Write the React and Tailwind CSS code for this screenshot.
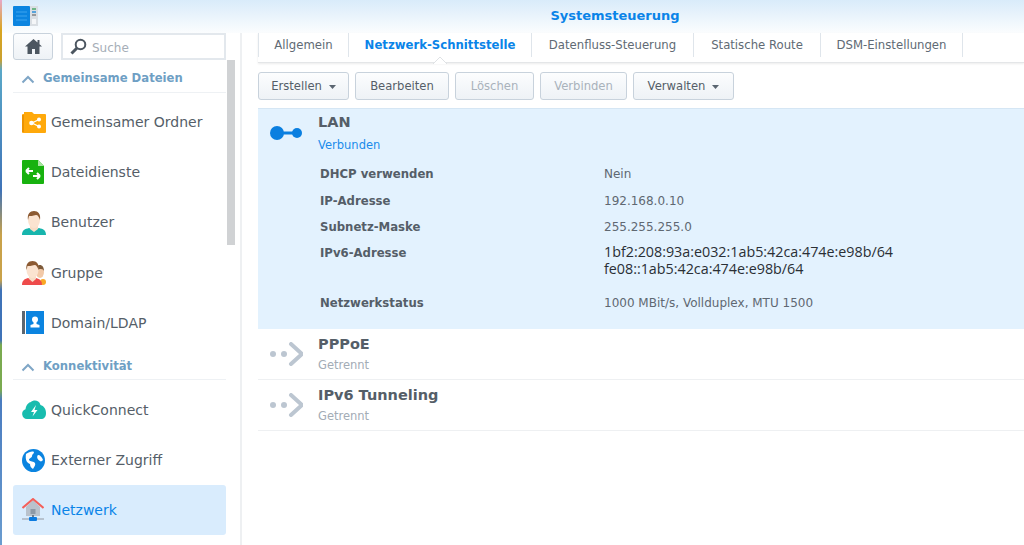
import React from "react";

const Caret = () => (
  <svg width="7" height="4" viewBox="0 0 7 4" className="ml-[7px]"><path d="M0 0h7L3.500 4z" fill="#5a6570" /></svg>
);
const Chev = () => (
  <svg width="14" height="9" viewBox="0 0 14 9" className="mr-[8px] ml-[1px]"><path d="M1.500 7.500 7 2l5.500 5.500" fill="none" stroke="#7fa6c6" strokeWidth="2" /></svg>
);

const Folder = () => (
  <svg width="24" height="22" viewBox="0 0 24 22"><path d="M1 3h1v-2h8l2 2h11a1 1 0 0 1 1 1v17a1 1 0 0 1-1 1H1a1 1 0 0 1-1-1V4a1 1 0 0 1 1-1z" fill="#ffa90b" /><path d="M1 4v17" stroke="#e58c00" strokeWidth="1.500" /><path d="M10 12l7-3.500M10 12l7 3.500" stroke="#fff" strokeWidth="1.300" /><circle cx="9.500" cy="12" r="2.300" fill="#fff" /><circle cx="17" cy="8.500" r="2" fill="#fff" /><circle cx="17" cy="15.500" r="2" fill="#fff" /></svg>
);
const FileSvc = () => (
  <svg width="22" height="24" viewBox="0 0 22 24"><path d="M1 0h15l6 6v17a1 1 0 0 1-1 1H1a1 1 0 0 1-1-1V1a1 1 0 0 1 1-1z" fill="#18b20f" /><path d="M16 0l6 6h-6z" fill="#a8e4a0" /><path d="M4 11h7M4 11l3-3M4 11l3 3M18 16h-7M18 16l-3-3M18 16l-3 3" fill="none" stroke="#fff" strokeWidth="2" /></svg>
);
const User = () => (
  <svg width="24" height="24" viewBox="0 0 24 24"><path d="M0 24c0-5 3-6 7-7l5 2 5-2c4 1 7 2 7 7z" fill="#17b5ad" /><path d="M8 15h8v3l-4 3-4-3z" fill="#f7dcc6" /><ellipse cx="12" cy="9" rx="6" ry="8" fill="#fbe3d0" /><path d="M6 9C5 3 8 0 12 0s7 3 6 9c-1-3-2-5-4-5-3 1-6 1-7 1z" fill="#8c5a32" /></svg>
);
const Group = () => (
  <svg width="24" height="24" viewBox="0 0 24 24"><ellipse cx="18" cy="11" rx="4" ry="6" fill="#f2c9a8" /><path d="M14 9c0-4 2-5 4-5s4 2 4 6c-1-2-2-3-8-1z" fill="#7d5a3a" /><circle cx="21" cy="21" r="3" fill="#f9a825" /><path d="M0 24c0-4 2-6 6-7l4 2 4-2c4 1 6 3 6 7z" fill="#ee4b4b" /><path d="M7 15h7v3l-3.500 3L7 18z" fill="#f7dcc6" /><ellipse cx="10.500" cy="9" rx="6" ry="8" fill="#fbe3d0" /><path d="M4.500 9C3.500 3 6.500 0 10.500 0s7 3 6 9c-1-3-2-5-4-5-3 1-6 1-7 1z" fill="#8c5a32" /></svg>
);
const Domain = () => (
  <svg width="22" height="24" viewBox="0 0 22 24"><rect x="0" y="0" width="3" height="23" fill="#5c6670" /><rect x="4" y="0" width="18" height="23" fill="#0b84e0" /><circle cx="13" cy="8.500" r="3" fill="#fff" /><path d="M11.500 11h3v2l3 1v2.500h-9V14l3-1z" fill="#fff" /></svg>
);
const Cloud = () => (
  <svg width="24" height="20" viewBox="0 0 24 20"><path d="M5 19a5 5 0 0 1-1.500-9.700C4 5 7 2 9 2c2-2 8-2.500 9.500 3C22 6 24 9 24 13c0 4-2 6-5 6z" fill="#18bcae" /><path d="M14 5l-5 7h3l-1.500 4.500 5-6.500h-3z" fill="#fff" /></svg>
);
const Globe = () => (
  <svg width="23" height="23" viewBox="0 0 23 23"><circle cx="11.500" cy="11.500" r="11.500" fill="#0b84e0" /><path d="M4 5c3-2 6-3 8-2 0 2-2 2-2 4s-3 2-3 4c1 2 5 1 6 3 1 2-1 4-2 6-2-1-3-3-3-5-3-1-5-4-4-10zM16 6c2 0 4 2 5 5-1 1-2 2-3 1-2-1-4-4-2-6z" fill="#fff" /></svg>
);
const Home = () => (
  <svg width="22" height="24" viewBox="0 0 22 24"><path d="M11 2 4 9v9h14V9z" fill="#b9c2cc" /><rect x="8.500" y="11" width="5" height="5" fill="#8d99a6" /><path d="M0.500 10 11 1l10.500 9" fill="none" stroke="#f4605a" strokeWidth="2" /><path d="M0 21h22" stroke="#aab4bf" strokeWidth="1.500" /><rect x="7" y="19" width="8" height="4" rx="1" fill="#0b7be0" /><rect x="10" y="17" width="2" height="2" fill="#6f7c89" /></svg>
);
const Connected = () => (
  <svg width="32" height="14" viewBox="0 0 32 14"><circle cx="7" cy="7" r="7" fill="#0a7fe0" /><circle cx="27" cy="7" r="5" fill="#0a7fe0" /><rect x="10" y="5.500" width="16" height="3" fill="#0a7fe0" /></svg>
);
const Disconnected = () => (
  <svg width="33" height="24" viewBox="0 0 33 24"><circle cx="3" cy="12" r="3" fill="#bcc6d1" /><circle cx="14" cy="12" r="3" fill="#bcc6d1" /><path d="M21 2l11 10-11 10" fill="none" stroke="#bcc6d1" strokeWidth="4" strokeLinecap="round" strokeLinejoin="round" /></svg>
);

const Logo = () => (
  <svg width="25" height="20" viewBox="0 0 25 20"><rect width="17" height="20" rx="1" fill="#0b84e0" /><path d="M3 6h11M3 10h11M3 14h11" stroke="#3fa4ee" /><rect x="17" width="8" height="20" fill="#d9dee3" /><path d="M19 3h4" stroke="#4aa86a" strokeWidth="1.500" /><path d="M19 6h4" stroke="#2b8fd8" strokeWidth="1.500" /><path d="M19 9h4" stroke="#555" /><rect x="19" y="13" width="4" height="5" fill="#f4f6f8" /></svg>
);

function Item({ icon, label, active, tall }) {
  return (
    <div className={`flex items-center rounded-[3px] pl-[9px] text-[14px] ${tall ? "h-[51px]" : "h-[50px]"} ${active ? "bg-[#d9ecfd] text-[#0a84e8]" : "text-[#555e68]"}`}>
      <span className="flex w-[29px] shrink-0 items-center justify-start">{icon}</span>
      <span>{label}</span>
    </div>
  );
}

function Section({ label, className = "" }) {
  return (
    <div className={`flex h-[27px] items-center border-b border-[#eef1f4] pl-[7px] text-[11.650px] font-bold text-[#6f9fc4] ${className}`}>
      <Chev />
      {label}
    </div>
  );
}

function Tab({ label, active, w }) {
  return (
    <div className={`relative flex h-[24px] items-center justify-center border-r border-[#dfe5eb] pt-[2px] text-[11.700px] ${w} ${active ? "font-bold text-[#0a84e8]" : "text-[#606a74]"}`}>
      {label}
      {active && (
        <svg width="14" height="7" viewBox="0 0 14 7" className="absolute bottom-[-7px] left-1/2 -translate-x-1/2">
          <path d="M0 7 7 0l7 7z" fill="#fff" />
          <path d="M0 7 7 0l7 7" fill="none" stroke="#dfe2e5" />
        </svg>
      )}
    </div>
  );
}

function Btn({ label, w, disabled, caret }) {
  return (
    <div className={`flex h-[28px] items-center justify-center rounded-[3px] border border-[#c8d2dc] bg-gradient-to-b from-[#fcfdfe] to-[#eef2f6] pt-[2px] text-[11.600px] ${w} ${disabled ? "text-[#a9b2bb]" : "text-[#555e68]"}`}>
      {label}
      {caret && <Caret />}
    </div>
  );
}

function Row({ label, children, className = "" }) {
  return (
    <div className={`flex text-[12px] ${className}`}>
      <div className="w-[284px] shrink-0 text-[11.700px] font-bold text-[#555e68]">{label}</div>
      <div className="text-[#5f6872]">{children}</div>
    </div>
  );
}

function Net({ label }) {
  return (
    <div className="flex h-[51px] items-center border-b border-[#eef0f2]">
      <span className="ml-[12px] flex w-[48px] shrink-0"><Disconnected /></span>
      <div className="-mt-[1px]">
        <div className="text-[14.500px] leading-[18px] font-bold text-[#555e68]">{label}</div>
        <div className="mt-[4px] text-[11.500px] leading-[16px] text-[#a3acb6]">Getrennt</div>
      </div>
    </div>
  );
}

export default function App() {
  return (
    <div className="flex h-[545px] w-[1024px] overflow-hidden bg-white font-['DejaVu_Sans',sans-serif]">
      <div className="w-[2px] shrink-0 bg-[linear-gradient(to_bottom,#e6a8c8_0px,#d9a520_30px,#c9a030_60px,#5aa8c8_70px,#3f73b8_190px,#c9a24a_235px,#c9a24a_280px,#3f73b8_290px,#3f73b8_340px,#7aaa50_345px,#7aaa50_390px,#4a7cc0_400px,#6a9ccf_545px)]" />
      <div className="min-w-0 flex-1">
        <div className="flex h-[33px] bg-gradient-to-b from-[#d9ebfa] to-[#fbfdfe]">
          <div className="mt-[6px] ml-[11px] h-[20px]"><Logo /></div>
          <div className="flex-1 pt-[7px] pl-[168px] text-center text-[13px] leading-[18px] font-bold text-[#0a84e8]">Systemsteuerung</div>
        </div>
        <div className="flex h-[512px]">
          <aside className="relative w-[240px] shrink-0 border-r-2 border-[#eef0f2] pl-[11px]">
            <div className="absolute top-[27px] left-[225px] h-[185px] w-[8px] bg-[#d0d2d4]" />
            <div className="flex w-[213px] gap-[8px]">
              <div className="flex h-[27px] w-[40px] items-center justify-center rounded-[3px] border border-[#c8d2dc] bg-gradient-to-b from-[#fcfdfe] to-[#eef2f6]">
                <svg width="17" height="15" viewBox="0 0 17 15"><path d="M8.500 0 0 7.500h2.500V15H7v-5h3v5h4.500V7.500H17l-2.500-2.200V1h-2v2.500z" fill="#4c5660" /></svg>
              </div>
              <div className="flex h-[27px] flex-1 items-center border-2 border-[#e3e8ed] pl-[7px] text-[12px] text-[#a6aeb7]">
                <svg width="17" height="17" viewBox="0 0 17 17" className="mr-[5px]"><circle cx="10.500" cy="6.500" r="4.800" fill="none" stroke="#4c5660" strokeWidth="2" /><path d="M7 10 1.500 15.500" stroke="#4c5660" strokeWidth="3" /></svg>
                <span className="pt-[2px]">Suche</span>
              </div>
            </div>
            <div className="w-[213px]">
              <Section label="Gemeinsame Dateien" className="mt-[6px]" />
              <div className="mt-[4px]">
                <Item icon={<Folder />} label="Gemeinsamer Ordner" />
                <Item icon={<FileSvc />} label="Dateidienste" />
                <Item icon={<User />} label="Benutzer" tall />
                <Item icon={<Group />} label="Gruppe" />
                <Item icon={<Domain />} label="Domain/LDAP" />
              </div>
              <Section label="Konnektivität" className="mt-[5px] pt-[2px]" />
              <div className="mt-[5px]">
                <Item icon={<Cloud />} label="QuickConnect" />
                <Item icon={<Globe />} label="Externer Zugriff" />
                <Item icon={<Home />} label="Netzwerk" active />
              </div>
            </div>
          </aside>
          <main className="min-w-0 flex-1 pl-[16px]">
            <div className="relative flex h-[30px] items-start border-b border-[#e4e6e8] shadow-[0_1px_2px_rgba(0,0,0,0.08)]">
              <div className="h-[24px] border-l border-[#dfe5eb]" />
              <Tab label="Allgemein" w="w-[90px]" />
              <Tab label="Netzwerk-Schnittstelle" w="w-[183px]" active />
              <Tab label="Datenfluss-Steuerung" w="w-[162px]" />
              <Tab label="Statische Route" w="w-[127px]" />
              <Tab label="DSM-Einstellungen" w="w-[142px]" />
            </div>
            <div className="mt-[9px] flex gap-[6px]">
              <Btn label="Erstellen" w="w-[91px]" caret />
              <Btn label="Bearbeiten" w="w-[94px]" />
              <Btn label="Löschen" w="w-[79px]" disabled />
              <Btn label="Verbinden" w="w-[87px]" disabled />
              <Btn label="Verwalten" w="w-[101px]" caret />
            </div>
            <div className="mt-[8px] h-[221px] border-t border-[#d5e6f4] bg-[#e3f2fe]">
              <div className="flex items-center pt-[4px]">
                <span className="ml-[12px] flex w-[48px] shrink-0"><Connected /></span>
                <div>
                  <div className="text-[14.500px] leading-[18px] font-bold text-[#555e68]">LAN</div>
                  <div className="mt-[6px] text-[11.500px] leading-[16px] text-[#1a8ceb]">Verbunden</div>
                </div>
              </div>
              <div className="pt-[13px] pl-[62px] leading-[16px]">
                <Row label="DHCP verwenden">Nein</Row>
                <Row label="IP-Adresse" className="mt-[11px]">192.168.0.10</Row>
                <Row label="Subnetz-Maske" className="mt-[10px]">255.255.255.0</Row>
                <Row label="IPv6-Adresse" className="mt-[10px]">
                  <div className="-mt-[2px] font-['Open_Sans',sans-serif] text-[14.300px] leading-[17px] text-[#2a2f35]">1bf2:208:93a:e032:1ab5:42ca:474e:e98b/64</div>
                  <div className="font-['Open_Sans',sans-serif] text-[14.300px] leading-[17px] text-[#2a2f35]">fe08::1ab5:42ca:474e:e98b/64</div>
                </Row>
                <Row label="Netzwerkstatus" className="mt-[18px]">1000 MBit/s, Vollduplex, MTU 1500</Row>
              </div>
            </div>
            <Net label="PPPoE" />
            <Net label="IPv6 Tunneling" />
          </main>
        </div>
      </div>
    </div>
  );
}
